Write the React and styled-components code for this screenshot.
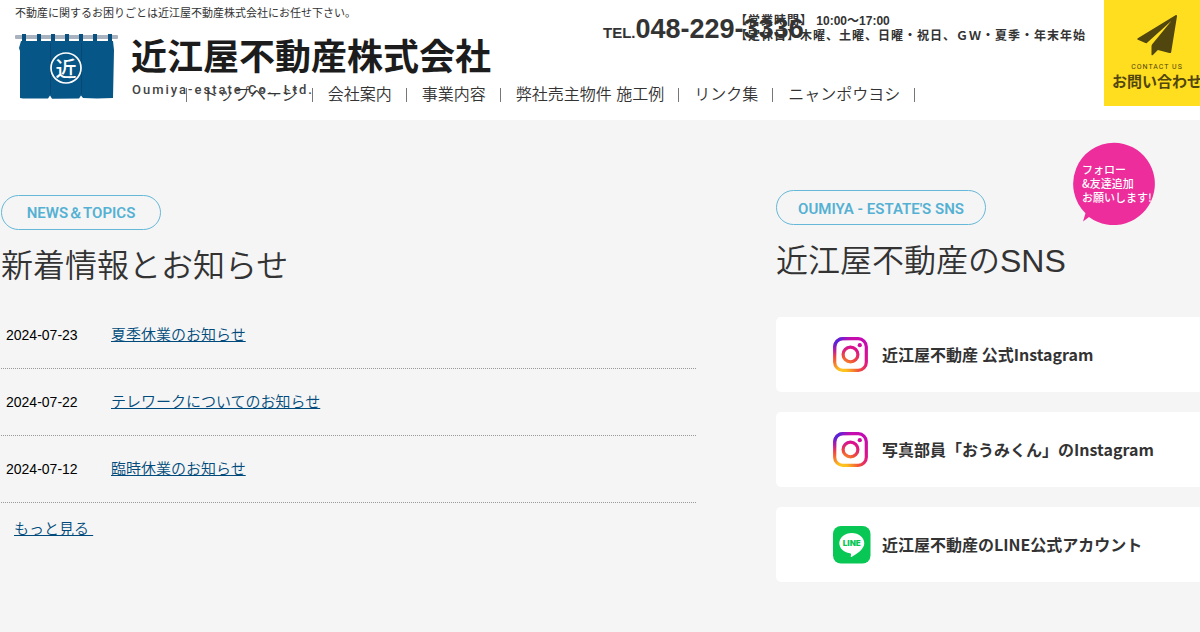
import React from 'react';
import styled, { createGlobalStyle } from 'styled-components';

const GlobalStyle = createGlobalStyle`
  *, *::before, *::after { box-sizing: border-box; }
  body {
    margin: 0;
    background: #f5f5f5;
    color: #333;
    font-family: "Liberation Sans", "Noto Sans CJK JP", sans-serif;
    font-size: 16px;
    font-weight: 350;
    overflow-x: hidden;
  }
  h1, h2, p, ul { margin: 0; padding: 0; font-weight: 350; }
  ul { list-style: none; }
  a { color: inherit; text-decoration: none; }
`;

const Header = styled.header`
  display: flex;
  justify-content: space-between;
  height: 120px;
  background: #fff;
  overflow: hidden;
`;

/* Brand, phone and menu share one grid; the menu row runs under the brand and over its last line. */
const HeaderGrid = styled.div`
  flex: 1;
  display: grid;
  grid-template-columns: 588px 1fr;
  grid-template-rows: 83px 24px;
  padding-left: 15px;
`;

const Brand = styled.div`
  grid-column: 1;
  grid-row: 1 / 3;
`;

const Tagline = styled.p`
  padding-top: 5px;
  font-size: 11px;
  font-weight: 400;
  line-height: 16px;
`;

const LogoLink = styled.a`
  display: flex;
  gap: 12px;
  padding-top: 12px;
`;

const Noren = styled.svg`
  width: 104px;
  height: 68px;
`;

const LogoText = styled.span`
  display: flex;
  flex-direction: column;
`;

const CompanyName = styled.span`
  font-family: "Noto Sans CJK JP", sans-serif;
  font-size: 36px;
  font-weight: 700;
  line-height: 42px;
  color: #1c1c1c;
  white-space: nowrap;
`;

const CompanyRoman = styled.span`
  padding: 6px 0 0 1px;
  font-family: Roboto, sans-serif;
  font-size: 13px;
  font-weight: 500;
  line-height: 18px;
  letter-spacing: 2px;
  color: #444;
`;

const Phone = styled.div`
  grid-column: 2;
  grid-row: 1;
  display: flex;
  font-weight: 700;
  white-space: nowrap;
`;

const Tel = styled.p`
  width: 132px;
  padding-top: 13px;
  font-size: 27px;
  font-weight: 700;
  line-height: 32px;
  small { font-size: 15px; }
`;

const Hours = styled.p`
  padding-top: 14px;
  font-size: 12px;
  font-weight: 700;
  line-height: 15px;
  span { display: block; }
  em { font-style: normal; letter-spacing: 1px; }
`;

const Menu = styled.nav`
  grid-column: 1 / 3;
  grid-row: 2;
  display: flex;
  align-items: center;
  padding-left: 171px;
  white-space: nowrap;
`;

const MenuItem = styled.a`
  padding: 0 14px 0 15px;
  border-right: 1px solid #777;
  line-height: 14px;
  &:first-child { border-left: 1px solid #777; }
`;

const Contact = styled.a`
  flex: none;
  display: flex;
  flex-direction: column;
  align-items: center;
  width: 106px;
  height: 106px;
  margin-right: -10px;
  padding-top: 15px;
  background: #ffdd1f;
  color: #51460d;
  svg { width: 42px; height: 42px; }
`;

const ContactSmall = styled.span`
  padding-top: 4px;
  font-family: Roboto, sans-serif;
  font-size: 7px;
  font-weight: 400;
  line-height: 12px;
  letter-spacing: 1px;
`;

const ContactLabel = styled.span`
  font-family: "Noto Sans CJK JP", sans-serif;
  font-size: 15px;
  font-weight: 700;
  line-height: 15px;
  white-space: nowrap;
`;

const Main = styled.main`
  display: flex;
  gap: 80px;
  padding-top: 70px;
`;

const News = styled.section`
  flex: 0 0 58%;
  padding: 5px 0 0 1px;
`;

const Sns = styled.section`
  position: relative;
  flex: 1;
  min-width: 0;
`;

const Pill = styled.p`
  display: flex;
  align-items: center;
  justify-content: center;
  width: ${(p) => p.$width}px;
  height: 35px;
  padding-top: 2px;
  border: 1px solid #65b8d8;
  border-radius: 18px;
  color: #55b1d3;
  font-family: Roboto, sans-serif;
  font-size: 15px;
  font-weight: 600;
`;

const Title = styled.h2`
  padding-top: 12px;
  font-size: 32px;
  line-height: 48px;
  white-space: nowrap;
`;

const NewsList = styled.ul`
  padding-top: 12px;
`;

const NewsRow = styled.li`
  display: flex;
  align-items: center;
  height: 67px;
  padding-left: 5px;
  border-bottom: 1px dotted #999;
`;

const NewsDate = styled.time`
  width: 105px;
  font-size: 14px;
  color: #000;
`;

const TextLink = styled.a`
  color: #004b7b;
  font-size: 15px;
  line-height: 24px;
  text-decoration: underline;
`;

const More = styled.p`
  padding: 14px 0 0 13px;
  white-space: pre;
`;

const SnsList = styled.ul`
  display: grid;
  gap: 20px;
  padding-top: 32px;
`;

const SnsCard = styled.a`
  display: flex;
  align-items: center;
  gap: 10px;
  height: 75px;
  padding-left: 56px;
  border-radius: 5px 0 0 5px;
  background: #fff;
  font-family: "Noto Sans CJK JP", sans-serif;
  font-weight: 700;
  white-space: nowrap;
  svg { width: 40px; height: 40px; }
  span { padding-bottom: 2px; }
`;

const Bubble = styled.div`
  position: absolute;
  top: -48px;
  right: 44px;
  width: 84px;
  height: 84px;
  padding: 20px 0 0 10px;
  color: #fff;
  font-family: "Noto Sans CJK JP", sans-serif;
  font-size: 11px;
  font-weight: 500;
  line-height: 14px;
  white-space: nowrap;
  svg { position: absolute; inset: 0; width: 84px; height: 84px; }
  span { position: relative; display: block; }
`;

const NorenMark = () => (
  <Noren viewBox="0 0 104 68" aria-hidden="true">
    <rect x="0" y="2" width="103" height="4" rx="1" fill="#a9b3c0" />
    {[7, 22, 36, 50, 64, 78, 93].map((x) => (
      <rect key={x} x={x} y="1" width="4" height="9" fill="#07507f" />
    ))}
    <path d="M6 8h92l1 9-1 48-16 .5-14-.4-2-2.500-2 3-27 .2-2-3.200-2 3-25-.2-3-.5V18l-1-3z" fill="#075688" />
    <path d="M35.500 10v51M66.500 10v51" stroke="#064873" strokeWidth="1" />
    <circle cx="51" cy="35" r="15" fill="none" stroke="#fff" strokeWidth="1.700" />
    <text x="51" y="43" textAnchor="middle" fill="#fff" fontSize="21" fontWeight="500" fontFamily="Noto Sans CJK JP, sans-serif">近</text>
  </Noren>
);

const PlaneIcon = () => (
  <svg viewBox="0 0 42 42" fill="currentColor" aria-hidden="true">
    <path d="M39.500.3 1.800 23.200c-.8.500-.7 1.200.1 1.600l7.500 3.300c.7.300 1.200.1 1.700-.4L35.500 5.700 16.200 29.200c-.5.700-.7 1.200-.7 2v8.300c0 .9.900 1.100 1.400.5l5-5 11.400 3c1 .3 1.700-.1 1.900-1.100L41 1.300c.1-.9-.7-1.500-1.500-1z" />
  </svg>
);

const InstagramIcon = ({ id }) => (
  <svg viewBox="0 0 40 40" fill="none" aria-hidden="true">
    <defs>
      <radialGradient id={id} cx="10" cy="39" r="40" gradientUnits="userSpaceOnUse">
        <stop offset="0" stopColor="#ffd21f" />
        <stop offset=".15" stopColor="#fdbb20" />
        <stop offset=".45" stopColor="#ef4a3c" />
        <stop offset=".7" stopColor="#dc128c" />
        <stop offset="1" stopColor="#c30bb4" />
      </radialGradient>
      <radialGradient id={`${id}-corner`} cx="0" cy="0" r="22" gradientUnits="userSpaceOnUse">
        <stop offset="0" stopColor="#3a2be0" />
        <stop offset=".4" stopColor="#5a24d8" />
        <stop offset="1" stopColor="#b010c0" stopOpacity="0" />
      </radialGradient>
    </defs>
    {[id, `${id}-corner`].map((paint) => (
      <g key={paint}>
        <rect x="2.700" y="3.700" width="31.600" height="31.600" rx="8" stroke={`url(#${paint})`} strokeWidth="3.200" />
        <circle cx="18.500" cy="19.500" r="7.400" stroke={`url(#${paint})`} strokeWidth="3.200" />
        <circle cx="27.800" cy="10.200" r="2.100" fill={`url(#${paint})`} />
      </g>
    ))}
  </svg>
);

const LineIcon = () => (
  <svg viewBox="0 0 40 40" aria-hidden="true">
    <rect x="1" y="1" width="37.500" height="37.500" rx="8" fill="#08c755" />
    <path d="M32.300 18.300c0-5.600-5.600-10.200-12.500-10.200S7.300 12.700 7.300 18.300c0 5 4.500 9.200 10.500 10 1.500.3 1.300.9 1 2.900-.1.500-.2 1.200.8.700 4.600-2.500 12.700-7.500 12.700-13.600z" fill="#fff" />
    <text x="19.800" y="21" textAnchor="middle" fill="#08c755" fontSize="8" fontWeight="900" fontFamily="Inter, sans-serif">LINE</text>
  </svg>
);

const menu = ['トップページ', '会社案内', '事業内容', '弊社売主物件 施工例', 'リンク集', 'ニャンポウヨシ'];

const news = [
  ['2024-07-23', '夏季休業のお知らせ'],
  ['2024-07-22', 'テレワークについてのお知らせ'],
  ['2024-07-12', '臨時休業のお知らせ'],
];

export default function App() {
  return (
    <>
      <GlobalStyle />
      <Header>
        <HeaderGrid>
          <Brand>
            <Tagline>不動産に関するお困りごとは近江屋不動産株式会社にお任せ下さい。</Tagline>
            <h1>
              <LogoLink href="#">
                <NorenMark />
                <LogoText>
                  <CompanyName>近江屋不動産株式会社</CompanyName>
                  <CompanyRoman>Oumiya-estate Co., Ltd.</CompanyRoman>
                </LogoText>
              </LogoLink>
            </h1>
          </Brand>
          <Phone>
            <Tel><small>TEL.</small>048-229-3336</Tel>
            <Hours>
              <span><em>【営業時間】</em> 10:00～17:00</span>
              <span><em>【定休日】木曜、土曜、日曜・祝日、ＧＷ・夏季・年末年始</em></span>
            </Hours>
          </Phone>
          <Menu>
            {menu.map((label) => (
              <MenuItem href="#" key={label}>{label}</MenuItem>
            ))}
          </Menu>
        </HeaderGrid>
        <Contact href="#">
          <PlaneIcon />
          <ContactSmall>CONTACT US</ContactSmall>
          <ContactLabel>お問い合わせ</ContactLabel>
        </Contact>
      </Header>
      <Main>
        <News>
          <Pill $width={160}>NEWS＆TOPICS</Pill>
          <Title>新着情報とお知らせ</Title>
          <NewsList>
            {news.map(([date, title]) => (
              <NewsRow key={date}>
                <NewsDate>{date}</NewsDate>
                <TextLink href="#">{title}</TextLink>
              </NewsRow>
            ))}
          </NewsList>
          <More><TextLink href="#">{'もっと見る '}</TextLink></More>
        </News>
        <Sns>
          <Pill $width={210}>OUMIYA - ESTATE'S SNS</Pill>
          <Title>近江屋不動産のSNS</Title>
          <Bubble>
            <svg viewBox="0 0 84 84" aria-hidden="true">
              <path d="M42 .7a41.200 41.200 0 1 1-25 74.200L11 79.500l2.500-8.200A41.200 41.200 0 0 1 42 .7z" fill="#ed2d9b" />
            </svg>
            <span>フォロー</span>
            <span>&amp;友達追加</span>
            <span>お願いします!</span>
          </Bubble>
          <SnsList>
            <li><SnsCard href="#"><InstagramIcon id="ig-official" /><span>近江屋不動産 公式Instagram</span></SnsCard></li>
            <li><SnsCard href="#"><InstagramIcon id="ig-oumi" /><span>写真部員「おうみくん」のInstagram</span></SnsCard></li>
            <li><SnsCard href="#"><LineIcon /><span>近江屋不動産のLINE公式アカウント</span></SnsCard></li>
          </SnsList>
        </Sns>
      </Main>
    </>
  );
}
